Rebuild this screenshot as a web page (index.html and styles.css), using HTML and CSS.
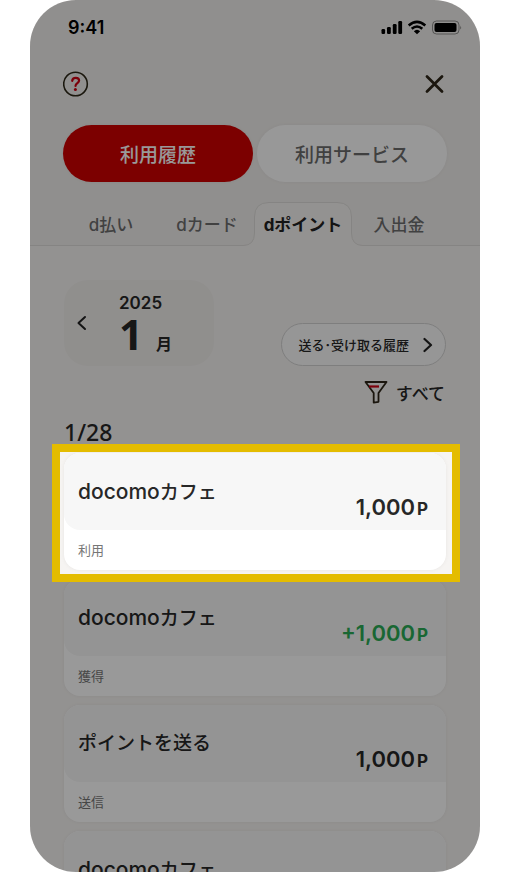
FILE: index.html
```html
<!DOCTYPE html>
<html lang="ja">
<head>
<meta charset="utf-8">
<meta name="viewport" content="width=device-width, initial-scale=1">
<title>利用履歴</title>
<link rel="stylesheet" href="styles.css">
</head>
<body>
<div class="phone">
  <div class="top">
    <div class="status">
      <span class="clock">9:41</span>
      <svg class="status-icons" width="81" height="16" viewBox="0 0 81 16" aria-hidden="true">
        <rect x="0.500" y="9" width="3.600" height="5" rx="1.200"/>
        <rect x="6" y="7" width="3.800" height="7" rx="1.200"/>
        <rect x="11.800" y="4" width="3.800" height="10" rx="1.200"/>
        <rect x="17.300" y="1" width="3.800" height="13" rx="1.200"/>
        <path d="M27.700 5.400Q36 -1.800 44.300 5.400" fill="none" stroke="#000" stroke-width="2.600"/>
        <path d="M30.700 8.800Q36 4.200 41.300 8.800" fill="none" stroke="#000" stroke-width="2.600"/>
        <path d="M32.800 11.200Q36 8.200 39.200 11.200L36 14.200Z"/>
        <rect x="51.500" y="1" width="26.500" height="13" rx="4" fill="none" stroke="#000" stroke-opacity=".4"/>
        <rect x="53.500" y="3" width="22" height="9" rx="2"/>
        <path d="M79.300 5.500q1.500 2 0 4z" fill-opacity=".5"/>
      </svg>
    </div>
    <header class="bar">
      <button class="icon-btn" aria-label="ヘルプ">
        <svg width="26" height="26" viewBox="0 0 26 26" fill="none">
          <circle cx="12.500" cy="13" r="11.800" stroke="#2d2818" stroke-width="1.600"/>
          <path d="M9.200 9.800c.3-4 6.900-3.800 6.900-.2 0 2.400-3.600 2.600-3.600 5.400" stroke="#cf0012" stroke-width="2.200" stroke-linecap="round"/>
          <circle cx="12.400" cy="18.400" r="1.500" fill="#cf0012"/>
        </svg>
      </button>
      <button class="icon-btn" aria-label="閉じる">
        <svg width="26" height="26" viewBox="0 0 26 26" fill="none" stroke="#2d2618" stroke-width="2.800" stroke-linecap="round"><path d="M6 5.500l15 15M21 5.500l-15 15"/></svg>
      </button>
    </header>
    <div class="switch">
      <button class="pill pill-on">利用履歴</button>
      <button class="pill">利用サービス</button>
    </div>
    <nav class="tabs">
      <a class="tab" href="#pay">d払い</a>
      <a class="tab" href="#card">dカード</a>
      <a class="tab tab-on" href="#point">
        <svg class="tab-shape" viewBox="0 0 120 44" width="120" height="44" aria-hidden="true"><path d="M0 43.500Q11.500 43.500 11.500 31V15Q11.500 .5 26 .5H94Q108.500 .5 108.500 15V31Q108.500 43.500 120 43.500V44H0Z" fill="#f6f4f2"/><path d="M0 43.500Q11.500 43.500 11.500 31V15Q11.500 .5 26 .5H94Q108.500 .5 108.500 15V31Q108.500 43.500 120 43.500" fill="none" stroke="#dedcda"/></svg>
        <span>dポイント</span>
      </a>
      <a class="tab" href="#cash">入出金</a>
    </nav>
  </div>
  <main class="content">
    <div class="tools">
      <div class="month">
        <button class="prev" aria-label="前の月"><svg width="10" height="16" viewBox="0 0 10 16" fill="none" stroke="#222" stroke-width="2" stroke-linecap="round" stroke-linejoin="round"><path d="M8 2L1.500 8L8 14"/></svg></button>
        <div class="month-text">
          <span class="year">2025</span>
          <span class="month-line"><span class="number">1</span><span class="unit">月</span></span>
        </div>
      </div>
      <a class="transfer" href="#transfer"><span>送る･受け取る履歴</span><svg width="10" height="16" viewBox="0 0 10 16" fill="none" stroke="#222" stroke-width="2.200" stroke-linecap="round" stroke-linejoin="round"><path d="M1.500 2L8 8l-6.500 6"/></svg></a>
    </div>
    <button class="filter">
      <svg width="24" height="24" viewBox="0 0 24 24" fill="none" stroke="#2d2618" stroke-width="1.800" stroke-linejoin="round"><path d="M1.500 2h21l-8 11v8.800l-4.800.9V13Z"/><path d="M5 6.500h10" stroke="#cf0012" stroke-width="2.200"/></svg>
      <span>すべて</span>
    </button>
    <h2 class="date">1/28</h2>
    <div class="list">
      <article class="card card-focus">
        <div class="card-main"><h3><span class="latin">docomo</span>カフェ</h3><p class="amount">1,000<small>P</small></p></div>
        <p class="kind">利用</p>
      </article>
      <article class="card">
        <div class="card-main"><h3><span class="latin">docomo</span>カフェ</h3><p class="amount plus">+1,000<small>P</small></p></div>
        <p class="kind">獲得</p>
      </article>
      <article class="card">
        <div class="card-main"><h3>ポイントを送る</h3><p class="amount">1,000<small>P</small></p></div>
        <p class="kind">送信</p>
      </article>
      <article class="card">
        <div class="card-main"><h3><span class="latin">docomo</span>カフェ</h3></div>
      </article>
    </div>
  </main>
</div>
</body>
</html>
```

FILE: styles.css
```css
* { box-sizing: border-box; }

body {
  margin: 0;
  background: #fff;
  color: #272727;
  font-family: Inter, "Noto Sans CJK JP", sans-serif;
}

h2, h3, p { margin: 0; }

button {
  padding: 0;
  border: 0;
  background: none;
  color: inherit;
  font: inherit;
}

a { color: inherit; text-decoration: none; }
svg { display: block; flex: none; }

.phone {
  height: 100vh;
  margin: 0 30px;
  border-radius: 46px;
  overflow: hidden;
  background: #f6f4f2;
}

.top {
  background: #f1efed;
  border-bottom: 1px solid #dedcda;
}

.status {
  display: flex;
  align-items: center;
  justify-content: space-between;
  height: 55px;
  padding: 0 18px 0 38px;
}

.clock {
  color: #000;
  font-size: 18px;
  font-weight: 600;
}

.bar {
  display: flex;
  align-items: center;
  justify-content: space-between;
  height: 58px;
  padding: 0 33px;
}

.switch {
  display: flex;
  gap: 4px;
  padding: 12px 33px 20px;
}

.pill {
  flex: 1;
  height: 57px;
  border-radius: 29px;
  background: #fefefe;
  box-shadow: 0 0 4px rgba(0, 0, 0, .05);
  color: #6b6b6b;
  font-size: 19px;
  font-weight: 500;
}

.pill-on { background: #cf0000; color: #fff; }

.tabs {
  display: grid;
  grid-template-columns: repeat(4, 1fr);
  height: 43px;
  padding: 0 33px;
}

.tab {
  position: relative;
  display: flex;
  align-items: center;
  justify-content: center;
  color: #6d6d6d;
  font-size: 17px;
  font-weight: 500;
  white-space: nowrap;
}

.tab-on { color: #222; font-weight: 700; }
.tab-on span { position: relative; }

.tab-shape {
  position: absolute;
  top: 0;
  left: 50%;
  margin-left: -60px;
}

.content { padding: 34px 34px 0; }

.tools {
  display: flex;
  align-items: flex-end;
  justify-content: space-between;
}

.month {
  display: flex;
  align-items: center;
  gap: 32px;
  width: 150px;
  height: 86px;
  padding-left: 13px;
  border-radius: 24px;
  background: #f0eeec;
}

.month-text {
  display: flex;
  flex-direction: column;
  padding-top: 2px;
}

.year {
  font-size: 17px;
  font-weight: 600;
  line-height: 20px;
}

.month-line {
  display: flex;
  align-items: baseline;
  gap: 13px;
}

.number {
  font-family: "Noto Sans", sans-serif;
  font-size: 42px;
  font-weight: 700;
  line-height: 42px;
}

.unit { font-size: 16px; font-weight: 700; line-height: 16px; }

.transfer {
  display: flex;
  align-items: center;
  gap: 14px;
  height: 43px;
  padding: 0 12px 0 16px;
  border: 1px solid #d2d2d2;
  border-radius: 22px;
  background: #fafafa;
  font-size: 13px;
  font-weight: 500;
}

.filter {
  display: flex;
  align-items: center;
  gap: 8px;
  height: 26px;
  margin: 13px 1px 0 auto;
  font-size: 17px;
  font-weight: 500;
}

.date {
  padding: 12px 0 6px;
  font-family: "Noto Sans", sans-serif;
  font-size: 23px;
  font-weight: 500;
  line-height: 30px;
}

.list { display: grid; gap: 9px; }

.card {
  border-radius: 16px;
  background: #fff;
  box-shadow: 0 0 4px rgba(0, 0, 0, .06);
}

.card-focus { position: relative; }

/* Spotlight frame: dims everything outside the selected card */
.card-focus::after {
  content: "";
  position: absolute;
  z-index: 2;
  inset: -9px -14px -12px -12px;
  border: 8px solid #e4bc00;
  box-shadow: 0 0 0 1000px rgba(0, 0, 0, .4);
  pointer-events: none;
}

.card-main {
  display: flex;
  justify-content: space-between;
  height: 77px;
  padding: 0 18px 0 14px;
  border-radius: 16px 16px 0 16px;
  background: #f7f7f7;
}

.card h3 {
  padding-top: 24px;
  font-size: 19px;
  font-weight: 500;
  line-height: 30px;
}

.card .latin { font-size: 21px; }

.amount {
  padding-top: 39px;
  font-size: 22px;
  font-weight: 600;
  line-height: 30px;
}

.amount small {
  margin-left: 2px;
  font-size: 17px;
  font-weight: 700;
}

.plus { color: #2bac55; }

.kind {
  padding-left: 14px;
  color: #767676;
  font-size: 13px;
  line-height: 40px;
}
```
